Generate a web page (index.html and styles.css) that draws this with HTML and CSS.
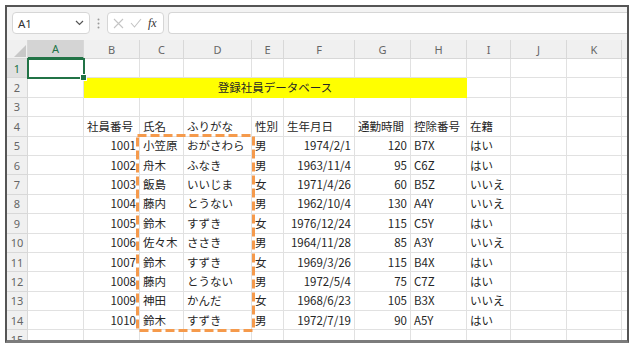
FILE: index.html
```html
<!DOCTYPE HTML>
<html>
<head>
<meta charset="utf-8">
<title>登録社員データベース</title>
<link rel="stylesheet" href="styles.css">
</head>

<body>
<div class="window">
    <div class="formula-bar">
        <div class="name-box">
            <span>A1</span>
            <svg class="chevron" width="9" height="6" viewBox="0 0 9 6"><polyline points="1,1 4.5,4.5 8,1" fill="none" stroke="#555" stroke-width="1.2"/></svg>
        </div>
        <div class="grip">
            <svg width="3" height="11" viewBox="0 0 3 11"><circle cx="1.5" cy="1.5" r="1" fill="#9a9a9a"/><circle cx="1.5" cy="5.5" r="1" fill="#9a9a9a"/><circle cx="1.5" cy="9.5" r="1" fill="#9a9a9a"/></svg>
        </div>
        <div class="fx-box">
            <svg width="11" height="11" viewBox="0 0 11 11"><path d="M1 1 L10 10 M10 1 L1 10" stroke="#c4c4c4" stroke-width="1.1"/></svg>
            <svg width="12" height="10" viewBox="0 0 12 10"><polyline points="1,5 4.5,9 11,1" fill="none" stroke="#c4c4c4" stroke-width="1.1"/></svg>
            <span class="fx">fx</span>
        </div>
        <div class="formula-input"></div>
    </div>

    <table class="sheet">
        <colgroup>
            <col style="width:21px"><col style="width:56px"><col style="width:56px"><col style="width:44px">
            <col style="width:68px"><col style="width:32px"><col style="width:71px"><col style="width:56px">
            <col style="width:56px"><col style="width:44px"><col style="width:56px"><col style="width:55px">
            <col style="width:40px">
        </colgroup>
        <tr class="head">
            <th class="corner"><svg class="tri" width="12" height="12" viewBox="0 0 12 12"><polygon points="12,0 12,12 0,12" fill="#c8c8c8"/></svg></th>
            <th class="on">A</th><th>B</th><th>C</th><th>D</th><th>E</th><th>F</th><th>G</th><th>H</th><th>I</th><th>J</th><th>K</th><th></th>
        </tr>
        <tr>
            <td class="rh on">1</td><td class="sel"></td><td></td><td></td><td></td><td></td><td></td><td></td><td></td><td></td><td></td><td></td><td></td>
        </tr>
        <tr>
            <td class="rh">2</td><td></td><td class="title" colspan="7">登録社員データベース</td><td></td><td></td><td></td><td></td>
        </tr>
        <tr>
            <td class="rh">3</td><td></td><td></td><td></td><td></td><td></td><td></td><td></td><td></td><td></td><td></td><td></td><td></td>
        </tr>
        <tr>
            <td class="rh">4</td><td></td><td>社員番号</td><td>氏名</td><td>ふりがな</td><td>性別</td><td>生年月日</td><td>通勤時間</td><td>控除番号</td><td>在籍</td><td></td><td></td><td></td>
        </tr>
        <tr>
            <td class="rh">5</td><td></td><td class="num">1001</td><td>小笠原</td><td>おがさわら</td><td>男</td><td class="num">1974/2/1</td><td class="num">120</td><td>B7X</td><td>はい</td><td></td><td></td><td></td>
        </tr>
        <tr>
            <td class="rh">6</td><td></td><td class="num">1002</td><td>舟木</td><td>ふなき</td><td>男</td><td class="num">1963/11/4</td><td class="num">95</td><td>C6Z</td><td>はい</td><td></td><td></td><td></td>
        </tr>
        <tr>
            <td class="rh">7</td><td></td><td class="num">1003</td><td>飯島</td><td>いいじま</td><td>女</td><td class="num">1971/4/26</td><td class="num">60</td><td>B5Z</td><td>いいえ</td><td></td><td></td><td></td>
        </tr>
        <tr>
            <td class="rh">8</td><td></td><td class="num">1004</td><td>藤内</td><td>とうない</td><td>男</td><td class="num">1962/10/4</td><td class="num">130</td><td>A4Y</td><td>いいえ</td><td></td><td></td><td></td>
        </tr>
        <tr>
            <td class="rh">9</td><td></td><td class="num">1005</td><td>鈴木</td><td>すずき</td><td>女</td><td class="num">1976/12/24</td><td class="num">115</td><td>C5Y</td><td>はい</td><td></td><td></td><td></td>
        </tr>
        <tr>
            <td class="rh">10</td><td></td><td class="num">1006</td><td>佐々木</td><td>ささき</td><td>男</td><td class="num">1964/11/28</td><td class="num">85</td><td>A3Y</td><td>いいえ</td><td></td><td></td><td></td>
        </tr>
        <tr>
            <td class="rh">11</td><td></td><td class="num">1007</td><td>鈴木</td><td>すずき</td><td>女</td><td class="num">1969/3/26</td><td class="num">115</td><td>B4X</td><td>はい</td><td></td><td></td><td></td>
        </tr>
        <tr>
            <td class="rh">12</td><td></td><td class="num">1008</td><td>藤内</td><td>とうない</td><td>男</td><td class="num">1972/5/4</td><td class="num">75</td><td>C7Z</td><td>はい</td><td></td><td></td><td></td>
        </tr>
        <tr>
            <td class="rh">13</td><td></td><td class="num">1009</td><td>神田</td><td>かんだ</td><td>女</td><td class="num">1968/6/23</td><td class="num">105</td><td>B3X</td><td>いいえ</td><td></td><td></td><td></td>
        </tr>
        <tr>
            <td class="rh">14</td><td></td><td class="num">1010</td><td>鈴木</td><td>すずき</td><td>男</td><td class="num">1972/7/19</td><td class="num">90</td><td>A5Y</td><td>はい</td><td></td><td></td><td></td>
        </tr>
        <tr>
            <td class="rh">15</td><td></td><td></td><td></td><td></td><td></td><td></td><td></td><td></td><td></td><td></td><td></td><td></td>
        </tr>
    </table>

    <!-- dashed marquee drawn around C5:D14 -->
    <svg class="marquee" width="122" height="200" viewBox="0 0 122 200">
        <rect x="1.5" y="1.5" width="116" height="195" fill="none" stroke="#f59a4c" stroke-width="3" stroke-dasharray="9 4"/>
    </svg>
</div>
</body>
</html>
```

FILE: styles.css
```css
html, body {
    margin: 0;
    background: #fff;
}
body {
    font-family: "Noto Sans CJK JP", "Noto Sans", sans-serif;
}
.window {
    position: relative;
    width: 624px;
    height: 338px;
    margin: 5px 0 0 5px;
    border: 2px solid #555;
    border-bottom: 3px solid #7c7c7c;
    box-sizing: border-box;
    overflow: hidden;
    background: #f3f3f3;
}

/* formula bar */
.formula-bar {
    display: flex;
    align-items: flex-start;
    height: 33px;
    padding: 5px 0 0 5px;
    box-sizing: border-box;
}
.name-box {
    width: 78px;
    height: 22px;
    box-sizing: border-box;
    border: 1px solid #d6d6d6;
    border-radius: 4px;
    background: #fff;
    display: flex;
    align-items: center;
    justify-content: space-between;
    padding: 0 5px 0 5px;
    font: 11.5px "Noto Sans", sans-serif;
    color: #333;
}
.grip {
    width: 17px;
    height: 22px;
    display: flex;
    align-items: center;
    justify-content: center;
}
.fx-box {
    width: 57px;
    height: 22px;
    box-sizing: border-box;
    border: 1px solid #d6d6d6;
    border-radius: 4px;
    background: #fff;
    display: flex;
    align-items: center;
    gap: 6px;
    padding: 0 0 0 5px;
}
.fx {
    font: italic 12px "Liberation Serif", serif;
    color: #333;
}
.formula-input {
    flex: 1;
    height: 22px;
    margin-left: 4px;
    box-sizing: border-box;
    border: 1px solid #d6d6d6;
    border-right: none;
    border-radius: 4px 0 0 4px;
    background: #fff;
}

/* grid */
.sheet {
    border-collapse: separate;
    border-spacing: 0;
    table-layout: fixed;
    width: 655px;
    background: #fff;
    font-size: 11.5px;
    color: #262626;
}
.sheet tr {
    height: 19.4px;
}
.sheet tr.head {
    height: 19px;
}
.sheet td, .sheet th {
    border-right: 1px solid #e1e1e1;
    border-bottom: 1px solid #e1e1e1;
    padding: 0 3px;
    line-height: 17px;
    white-space: nowrap;
    overflow: hidden;
    text-align: left;
}
.sheet th {
    background: #f0f0f0;
    border-color: #d8d8d8;
    font: 11px "Noto Sans", sans-serif;
    color: #666;
    text-align: center;
}
.sheet th.on {
    background: #d4d4d4;
    color: #217346;
    border-bottom: 2px solid #217346;
}
.sheet th.corner {
    position: relative;
    padding: 0;
}
.tri {
    position: absolute;
    right: 1px;
    bottom: 1px;
}
.sheet td.rh {
    background: #f0f0f0;
    border-color: #d8d8d8;
    font: 11px "Noto Sans", sans-serif;
    color: #666;
    text-align: center;
    padding: 0;
}
.sheet td.rh.on {
    background: #e0e0e0;
    color: #217346;
}
.sheet td.num {
    text-align: right;
}
.sheet td.title {
    background: #ffff00;
    border-color: #ffff00;
    text-align: center;
}
.sheet td.sel {
    position: relative;
    outline: 2px solid #217346;
    outline-offset: -1px;
    overflow: visible;
}
.sheet td.sel::after {
    content: "";
    position: absolute;
    right: -4px;
    bottom: -4px;
    width: 5px;
    height: 5px;
    background: #217346;
    border: 1px solid #fff;
}
.marquee {
    position: absolute;
    left: 129px;
    top: 127px;
}
```
